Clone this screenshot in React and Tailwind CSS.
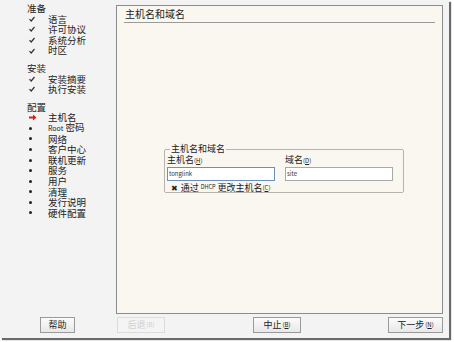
import React from 'react';

const font = { fontFamily: '"Noto Sans CJK SC", "DejaVu Sans", sans-serif' };

const sections = [
  { title: '准备', items: [['check', '语言'], ['check', '许可协议'], ['check', '系统分析'], ['check', '时区']] },
  { title: '安装', items: [['check', '安装摘要'], ['check', '执行安装']] },
  {
    title: '配置',
    items: [
      ['arrow', '主机名'],
      ['dot', 'Root 密码'],
      ['dot', '网络'],
      ['dot', '客户中心'],
      ['dot', '联机更新'],
      ['dot', '服务'],
      ['dot', '用户'],
      ['dot', '清理'],
      ['dot', '发行说明'],
      ['dot', '硬件配置'],
    ],
  },
];

function Marker({ kind }) {
  if (kind === 'check') {
    return (
      <svg width="6" height="6" viewBox="0 0 6 6">
        <path d="M0.5 3.2 L2.2 5 L5.5 1" stroke="#333" strokeWidth="1.2" fill="none" />
      </svg>
    );
  }
  if (kind === 'arrow') {
    return (
      <svg width="8" height="7" viewBox="0 0 8 7">
        <path d="M0 2.5 H4 V0.5 L7.5 3.5 L4 6.5 V4.5 H0 Z" fill="#d42020" />
      </svg>
    );
  }
  return <span className="block w-[3px] h-[3px] rounded-full bg-[#222]" />;
}

function Label({ text }) {
  // "Root" renders small in the reference
  if (text.startsWith('Root')) {
    return (
      <span>
        <span className="text-[7px]">Root</span> 密码
      </span>
    );
  }
  return <span>{text}</span>;
}

function Btn({ children, disabled, className = '' }) {
  return (
    <button
      className={`h-[16px] border text-[9px] leading-none flex items-center justify-center ${
        disabled ? 'border-[#dcdcdc] text-[#d0d0d0] bg-[#f4f4f4]' : 'border-[#9a9a9a] text-[#222] bg-gradient-to-b from-[#fbfbfb] to-[#e8e8e8]'
      } ${className}`}
    >
      {children}
    </button>
  );
}

export default function App() {
  return (
    <div className="w-[454px] h-[342px] bg-white" style={font}>
      <div className="w-[449px] h-[338px] bg-[#f3f3f3] shadow-[2px_2px_1px_#6a6a6a] flex flex-col">
        <div className="flex flex-1">
          {/* Sidebar */}
          <div className="w-[116px] pl-[27px] pt-[3px] text-[9.5px] leading-[10.6px] text-[#222]">
            {sections.map((s) => (
              <div key={s.title} className="mb-[7px]">
                <div className="h-[10.6px]">{s.title}</div>
                {s.items.map(([kind, text]) => (
                  <div key={text} className="flex items-center h-[10.6px]">
                    <span className="w-[21px] flex items-center pl-[2px]">
                      <Marker kind={kind} />
                    </span>
                    <Label text={text} />
                  </div>
                ))}
              </div>
            ))}
          </div>

          {/* Main panel */}
          <div className="flex-1 mt-[5px] mr-[6px] h-[309px] border border-[#8c8c8c] bg-[#faf7f1] flex flex-col">
            <div className="px-[7px] pt-[1px]">
              <div className="text-[10px] leading-[14px] text-[#222] pl-[1px] pb-[1px] border-b border-[#9a9a9a]">主机名和域名</div>
            </div>
            <div className="flex-1 flex justify-center pl-[9px] pt-[121px]">
              <fieldset className="w-[238px] h-[49px] border border-[#b8b4ac] rounded-[2px] pl-[2px] pr-[10px] pb-[3px] m-0">
                <legend className="text-[9px] leading-[10px] text-[#222] px-[1px] ml-[3px]">主机名和域名</legend>
                <div className="flex gap-[10px] mt-[1px]">
                  <div className="w-[108px]">
                    <div className="text-[9px] leading-[10px] h-[10px] text-[#222]">
                      主机名<span className="text-[6px]">(<u>H</u>)</span>
                    </div>
                    <div className="h-[14px] mt-[2px] border border-[#6d8fc0] bg-white text-[6px] leading-[12px] px-[1px] text-[#333]">
                      tonglink
                    </div>
                  </div>
                  <div className="w-[108px]">
                    <div className="text-[9px] leading-[10px] h-[10px] text-[#222]">
                      域名<span className="text-[6px]">(<u>D</u>)</span>
                    </div>
                    <div className="h-[14px] mt-[2px] border border-[#a9a9a9] bg-white text-[6px] leading-[12px] px-[1px] text-[#333]">
                      site
                    </div>
                  </div>
                </div>
                <div className="flex items-center h-[11px] text-[9px] leading-[11px] text-[#222] mt-[1px] pl-[4px]">
                  <span className="text-[8px] mr-[3px]">✖</span>
                  通过 <span className="text-[5.5px] mx-[2px]">DHCP</span>更改主机名
                  <span className="text-[6px]">(<u>C</u>)</span>
                </div>
              </fieldset>
            </div>
          </div>
        </div>

        {/* Button row */}
        <div className="h-[24px] flex items-center pb-[3px]">
          <Btn className="ml-[40px] w-[35px]">帮助</Btn>
          <Btn disabled className="ml-[42px] w-[48px]">
            后退<span className="text-[6px] ml-[1px]">(B)</span>
          </Btn>
          <Btn className="ml-[88px] w-[48px]">
            中止<span className="text-[6px] ml-[1px]">(<u>B</u>)</span>
          </Btn>
          <Btn className="ml-auto mr-[6px] w-[55px]">
            下一步<span className="text-[6px] ml-[1px]">(<u>N</u>)</span>
          </Btn>
        </div>
      </div>
    </div>
  );
}
